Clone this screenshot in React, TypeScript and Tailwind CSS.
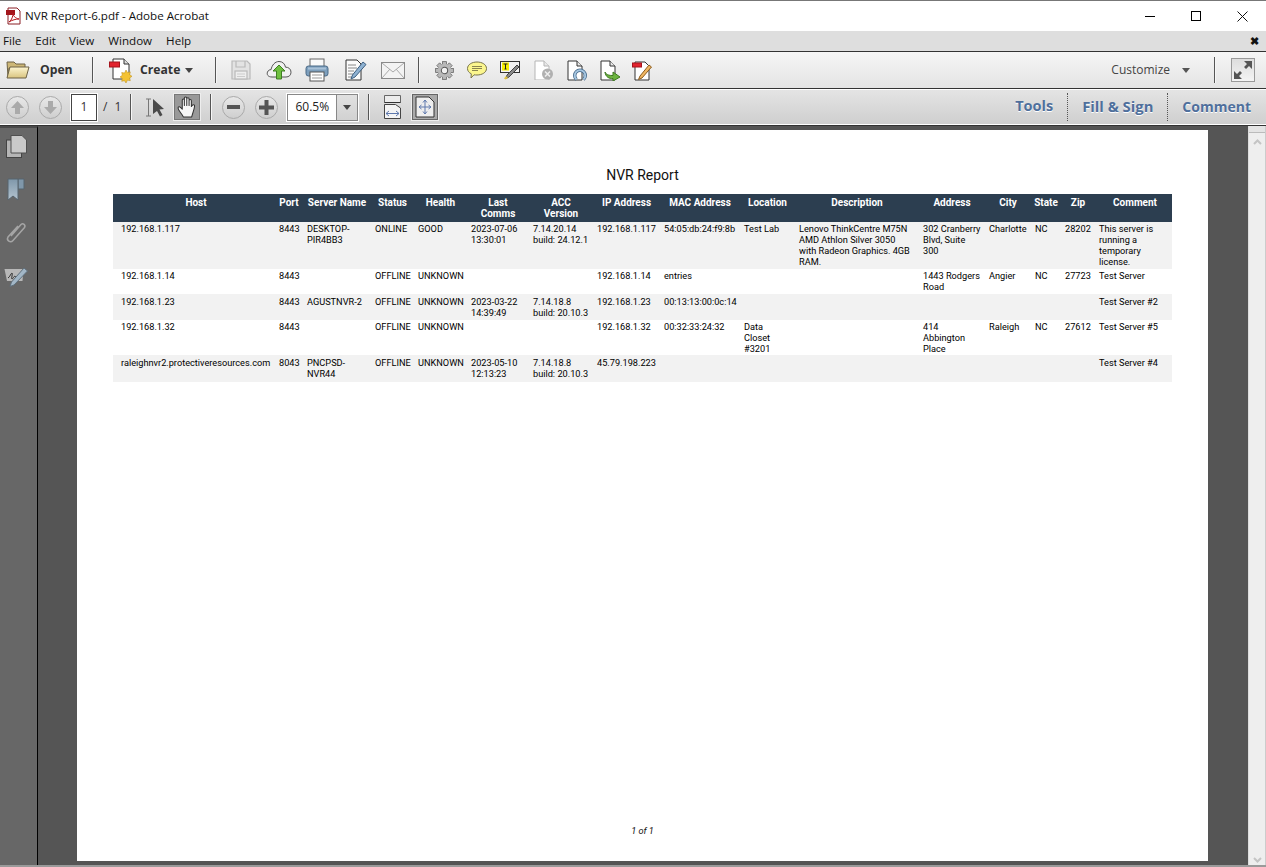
import { ReactNode } from 'react';

const uiFont = "font-['Open_Sans','Noto_Sans',sans-serif]";

// ---- window chrome icons ----
function PdfLogo() {
  return (
    <svg width="18" height="18" viewBox="0 0 18 18">
      <path d="M3 1h9l3 3v13H3z" fill="#fff" stroke="#8a1f24" />
      <rect x="1" y="3" width="9" height="5" fill="#a3161c" />
      <path d="M4 15c3-2 4-6 4-9 0 3 2 5 6 6-3 0-7 1-10 3z" fill="none" stroke="#b5161c" />
    </svg>
  );
}

function FolderIcon() {
  return (
    <svg width="24" height="22" viewBox="0 0 24 22">
      <defs>
        <linearGradient id="fold" x1="0" y1="0" x2="0" y2="1">
          <stop offset="0" stopColor="#fdf5d0" />
          <stop offset="1" stopColor="#d9c47f" />
        </linearGradient>
      </defs>
      <path d="M1 3h7l2 2h9v4H3L2 18z" fill="#cdb777" stroke="#6e6346" />
      <path d="M4 8h19l-3 11H1z" fill="url(#fold)" stroke="#6e6346" />
    </svg>
  );
}

function CreateIcon() {
  return (
    <svg width="24" height="26" viewBox="0 0 24 26">
      <path d="M4 2h11l5 5v15H4z" fill="#fff" stroke="#333" />
      <path d="M15 2v5h5" fill="#ddd" stroke="#333" />
      <rect x="0.5" y="5" width="10" height="5" fill="#e2232e" stroke="#a5141c" />
      <path d="M17 13l1.500 2.500 2.800-.6-.6 2.800 2.300 1.600-2.300 1.600.6 2.800-2.800-.6L17 26l-1.500-2.300-2.800.6.6-2.800-2.300-1.600 2.300-1.600-.6-2.800 2.800.6z" fill="#f4c233" stroke="#b98a18" strokeWidth="0.5" />
    </svg>
  );
}

function SaveIcon() {
  return (
    <svg width="20" height="20" viewBox="0 0 20 20" fill="none" stroke="#b9b9b9" strokeWidth="1.2">
      <path d="M1 1h15l3 3v15H1z" fill="#e3e3e3" />
      <path d="M5 1v6h9V1" />
      <rect x="4" y="11" width="12" height="8" fill="#eee" />
      <path d="M6 14h8M6 16.500h8" stroke="#ccc" />
    </svg>
  );
}

function UploadIcon() {
  return (
    <svg width="26" height="22" viewBox="0 0 26 22">
      <path d="M6 18C2 18 0.500 15.500 1.500 13c.7-1.600 2-2.400 3.500-2.300C6 6 9 2.500 13 2.500c3.600 0 6 2.500 6.500 5.700 3-.2 5.500 1.900 5.500 5 0 3-2 4.800-5 4.800z" fill="#f1f1f1" stroke="#555" />
      <path d="M13 6l6 6h-3.500v8h-5v-8H7z" fill="#6fc040" stroke="#3f7f22" />
    </svg>
  );
}

function PrintIcon() {
  return (
    <svg width="24" height="24" viewBox="0 0 24 24">
      <rect x="5" y="1" width="14" height="8" fill="#fafafa" stroke="#666" />
      <rect x="1" y="8" width="22" height="10" rx="2.500" fill="#7d9fbd" stroke="#4b6a87" />
      <rect x="3" y="9.500" width="18" height="2" fill="#a9c2d8" />
      <rect x="5" y="14" width="14" height="9" fill="#fff" stroke="#555" />
      <path d="M7 17h10M7 20h10" stroke="#999" />
    </svg>
  );
}

function EditDocIcon() {
  return (
    <svg width="22" height="22" viewBox="0 0 22 22">
      <path d="M1 1h11l4 4v16H1z" fill="#fbfbfb" stroke="#333" />
      <path d="M3 6h8M3 9h9M3 12h6M3 15h5M3 18h4" stroke="#888" />
      <path d="M18 3l3 2.500L10 18l-4 2 1.500-4z" fill="#8fb2d2" stroke="#3d5f80" />
    </svg>
  );
}

function MailIcon() {
  return (
    <svg width="24" height="17" viewBox="0 0 24 17" fill="#f3f3f3" stroke="#8a8a8a">
      <rect x="0.500" y="0.500" width="23" height="16" />
      <path d="M1 1l11 9 11-9M1 16l8-9M23 16l-8-9" fill="none" stroke="#aaa" />
    </svg>
  );
}

function GearIcon() {
  const teeth = [0, 45, 90, 135, 180, 225, 270, 315];
  return (
    <svg width="19" height="19" viewBox="0 0 24 24">
      {teeth.map((deg) => (
        <rect key={deg} x="9.500" y="0.800" width="5" height="5" fill="#b8b8b8" stroke="#666" transform={`rotate(${deg} 12 12)`} />
      ))}
      <circle cx="12" cy="12" r="8.500" fill="#b8b8b8" />
      <circle cx="12" cy="12" r="4" fill="#f2f2f2" stroke="#5a5a5a" strokeWidth="1.300" />
    </svg>
  );
}

function CommentIcon() {
  return (
    <svg width="20" height="18" viewBox="0 0 20 18">
      <path d="M10 1c5 0 9.500 2.500 9.500 6.500S15 14 10 14c-1 0-2 0-3-.2L4 17l.3-4.200C2 11.700.5 10 .5 7.500.5 3.500 5 1 10 1z" fill="#fbf68e" stroke="#77734a" />
      <path d="M5 5.500h10M5 7.500h10M5 9.500h6" stroke="#8a8550" />
    </svg>
  );
}

function TextEditIcon() {
  return (
    <svg width="20" height="20" viewBox="0 0 20 20">
      <rect x="0.500" y="1.500" width="19" height="11" fill="#f4f4f4" stroke="#333" />
      <rect x="2" y="2.500" width="7" height="8" fill="#f7f000" />
      <path d="M3.500 4h4M5.500 4v5M4.500 9h2" stroke="#222" fill="none" />
      <path d="M17 5l2 2L9 17l-3 1.500L7 15z" fill="#8a8a8a" stroke="#444" />
      <path d="M6 16l2 2-2.500 1.500-1.500-1z" fill="#e0c341" />
    </svg>
  );
}

function DocBase({ stroke = '#333' }: { stroke?: string }) {
  return (
    <>
      <path d="M1 1h9l5 5v14H1z" fill="#fff" stroke={stroke} />
      <path d="M10 1v5h5" fill="#e8e8e8" stroke={stroke} />
    </>
  );
}

function DocCancelIcon() {
  return (
    <svg width="20" height="20" viewBox="0 0 20 20">
      <DocBase stroke="#b5b5b5" />
      <circle cx="13.500" cy="14" r="5.500" fill="#b0b0b0" />
      <path d="M11 11.500l5 5M16 11.500l-5 5" stroke="#eee" strokeWidth="1.500" />
    </svg>
  );
}

function DocSearchIcon() {
  return (
    <svg width="20" height="21" viewBox="0 0 20 21">
      <DocBase />
      <path d="M9.500 19.500A5.300 5.300 0 1 1 16.500 19.500" fill="none" stroke="#3f6487" strokeWidth="3.400" />
      <path d="M9.500 19.500A5.300 5.300 0 1 1 16.500 19.500" fill="none" stroke="#a6c6e0" strokeWidth="2" />
    </svg>
  );
}

function DocSendIcon() {
  return (
    <svg width="21" height="21" viewBox="0 0 21 21">
      <DocBase />
      <path d="M5 12c1 3 4 3.500 8 3.500V12l7 5-7 4v-2.500c-4 .3-7.500-1.500-8-6.500z" fill="#6cb33f" stroke="#3d7a1f" />
    </svg>
  );
}

function DocPenIcon() {
  return (
    <svg width="20" height="21" viewBox="0 0 20 21">
      <path d="M3 2h10l4 4v14H3z" fill="#fff" stroke="#333" />
      <rect x="0.500" y="3" width="9" height="4" fill="#e2232e" stroke="#a5141c" />
      <path d="M17 5l2.500 2L10 18l-3.500 1.500L8 16z" fill="#f0b662" stroke="#8a5b1d" />
    </svg>
  );
}

function Caret({ fill = '#444' }: { fill?: string }) {
  return (
    <svg width="8" height="5" viewBox="0 0 8 5">
      <path d="M0 0h8L4 5z" fill={fill} />
    </svg>
  );
}

function Sep({ className = '' }: { className?: string }) {
  return <div className={`h-[26px] w-[2px] shrink-0 bg-[#555] border-r border-[#f6f6f6] ${className}`} />;
}

// ---- second toolbar icons ----
function RoundBtn({ className, children }: { className: string; children: ReactNode }) {
  return (
    <div className={`w-[23px] h-[23px] rounded-full border border-[#aaa] bg-gradient-to-b from-[#e8e8e8] to-[#cfcfcf] flex items-center justify-center shrink-0 ${className}`}>
      {children}
    </div>
  );
}

function ArrowUp({ flip = false }: { flip?: boolean }) {
  return (
    <svg width="13" height="13" viewBox="0 0 13 13" className={flip ? 'rotate-180' : ''}>
      <path d="M6.500 0l6.500 7H9v6H4V7H0z" fill="#aaa" />
    </svg>
  );
}

function SelectIcon() {
  return (
    <svg width="20" height="19" viewBox="0 0 20 19">
      <path d="M1 1h5M1 18h5M3.500 1v17" stroke="#777" fill="none" />
      <path d="M8 1l11 10-4.500.5 3 5.500-2.500 1.500-3-5.500L8 16z" fill="#4a4a4a" />
    </svg>
  );
}

function HandIcon() {
  return (
    <svg width="21" height="22" viewBox="0 0 20 21">
      <path d="M6 20c-1-3-5-6-5-8.500 0-1.500 1.500-1.500 2.500-.5L5 12.500V4c0-1.500 2-1.500 2 0v5-7c0-1.500 2.300-1.500 2.300 0v7V2.800c0-1.500 2.200-1.500 2.200 0V9 4.500c0-1.500 2.200-1.500 2.200 0V10c1-2 3.300-2.500 3 0-.3 3-1.700 6-2.700 10z" fill="#f6f6f6" stroke="#333" strokeLinejoin="round" />
    </svg>
  );
}

function FitWidthIcon() {
  return (
    <svg width="17" height="24" viewBox="0 0 17 24">
      <path d="M0.500 7.500v-7h16v7z" fill="#ececec" stroke="#666" />
      <path d="M0.500 7.500h16" stroke="#333" />
      <path d="M0.500 9.500h11l5 3.500v10.500h-16z" fill="#f4f4f4" stroke="#444" />
      <path d="M2 18.500h13M2 18.500l3-2.500M2 18.500l3 2.500M15 18.500l-3-2.500M15 18.500l-3 2.500" stroke="#5e78ad" fill="none" />
    </svg>
  );
}

function FitPageIcon() {
  return (
    <svg width="20" height="22" viewBox="0 0 20 22">
      <path d="M1 1h13l5 5v15H1z" fill="#eee" stroke="#333" />
      <path d="M10 4v14M4 11h12M10 4l-2 2.500M10 4l2 2.500M10 18l-2-2.500M10 18l2-2.500M4 11l2.500-2M4 11l2.500 2M16 11l-2.500-2M16 11l-2.500 2" stroke="#5e78ad" fill="none" />
    </svg>
  );
}

function ExpandIcon() {
  return (
    <svg width="18" height="18" viewBox="0 0 18 18" fill="#555">
      <path d="M10 0h8v8l-3-3-3 3-2-2 3-3z" />
      <path d="M0 10l3 3 3-3 2 2-3 3 3 3H0z" />
    </svg>
  );
}

// ---- left rail icons ----
function PagesIcon() {
  return (
    <svg width="21" height="23" viewBox="0 0 21 23">
      <rect x="0.500" y="5" width="15" height="17.500" fill="#b5b5b5" stroke="#444" />
      <path d="M5 0.500h11l4.500 4.500v13H5z" fill="#c9c9c9" stroke="#4f4f4f" />
    </svg>
  );
}

function BookmarkIcon() {
  return (
    <svg width="18" height="23" viewBox="0 0 18 23">
      <defs>
        <linearGradient id="mark" x1="0" y1="0" x2="0" y2="1">
          <stop offset="0" stopColor="#7f97aa" />
          <stop offset="1" stopColor="#b4c4d0" />
        </linearGradient>
      </defs>
      <path d="M11 1h6v10h-6z" fill="#7f97aa" stroke="#56646f" />
      <path d="M1 1h10v21l-5-4-5 4z" fill="url(#mark)" stroke="#56646f" />
    </svg>
  );
}

function ClipIcon() {
  return (
    <svg width="22" height="23" viewBox="0 0 22 23" fill="none" stroke="#a5a5a5" strokeWidth="1.500">
      <path d="M6 15L16 3.500c2-2 5 .5 3.500 3L8 19.500c-2.500 3-7 0-5-3.500L13 5" />
    </svg>
  );
}

function SignIcon() {
  return (
    <svg width="24" height="19" viewBox="0 0 24 19">
      <path d="M0.500 1h19l-1 12H3z" fill="#b8b8b8" />
      <path d="M4 10c2-1 3-5 4-5s-1 6 0 6 2-3 3-3 0 3 1 3" stroke="#333" fill="none" />
      <path d="M20 0l3.500 3L10 17l-4 1.500L7.500 14z" fill="#a2b6c6" stroke="#5f6f7c" />
    </svg>
  );
}

function ScrollChevron({ flip = false }: { flip?: boolean }) {
  return (
    <svg width="9" height="6" viewBox="0 0 9 6" className={flip ? 'rotate-180' : ''}>
      <path d="M1 5l3.500-3.500L8 5" stroke="#c4c4c4" strokeWidth="2" fill="none" />
    </svg>
  );
}

// ---- report data ----
const columns = [
  { title: 'Host', width: 'w-[162px]' },
  { title: 'Port', width: 'w-[28px]' },
  { title: 'Server Name', width: 'w-[68px]' },
  { title: 'Status', width: 'w-[43px]' },
  { title: 'Health', width: 'w-[53px]' },
  { title: 'Last\nComms', width: 'w-[62px]' },
  { title: 'ACC\nVersion', width: 'w-[64px]' },
  { title: 'IP Address', width: 'w-[67px]' },
  { title: 'MAC Address', width: 'w-[80px]' },
  { title: 'Location', width: 'w-[55px]' },
  { title: 'Description', width: 'w-[124px]' },
  { title: 'Address', width: 'w-[66px]' },
  { title: 'City', width: 'w-[46px]' },
  { title: 'State', width: 'w-[30px]' },
  { title: 'Zip', width: 'w-[34px]' },
  { title: 'Comment', width: 'w-[77px]' },
];

const rows = [
  {
    style: 'h-[47px] bg-[#f2f2f2]',
    cell: 'pt-[1px]',
    values: ['192.168.1.117', '8443', 'DESKTOP-\nPIR4BB3', 'ONLINE', 'GOOD', '2023-07-06\n13:30:01', '7.14.20.14\nbuild: 24.12.1', '192.168.1.117', '54:05:db:24:f9:8b', 'Test Lab', 'Lenovo ThinkCentre M75N\nAMD Athlon Silver 3050\nwith Radeon Graphics. 4GB\nRAM.', '302 Cranberry\nBlvd, Suite\n300', 'Charlotte', 'NC', '28202', 'This server is\nrunning a\ntemporary\nlicense.'],
  },
  {
    style: 'h-[25px] bg-white',
    cell: 'pt-[1px]',
    values: ['192.168.1.14', '8443', '', 'OFFLINE', 'UNKNOWN', '', '', '192.168.1.14', 'entries', '', '', '1443 Rodgers\nRoad', 'Angier', 'NC', '27723', 'Test Server'],
  },
  {
    style: 'h-[26px] bg-[#f2f2f2]',
    cell: 'pt-[2px]',
    values: ['192.168.1.23', '8443', 'AGUSTNVR-2', 'OFFLINE', 'UNKNOWN', '2023-03-22\n14:39:49', '7.14.18.8\nbuild: 20.10.3', '192.168.1.23', '00:13:13:00:0c:14', '', '', '', '', '', '', 'Test Server #2'],
  },
  {
    style: 'h-[35px] bg-white',
    cell: 'pt-[1px]',
    values: ['192.168.1.32', '8443', '', 'OFFLINE', 'UNKNOWN', '', '', '192.168.1.32', '00:32:33:24:32', 'Data\nCloset\n#3201', '', '414\nAbbington\nPlace', 'Raleigh', 'NC', '27612', 'Test Server #5'],
  },
  {
    style: 'h-[27px] bg-[#f2f2f2]',
    cell: 'pt-[2px]',
    values: ['raleighnvr2.protectiveresources.com', '8043', 'PNCPSD-\nNVR44', 'OFFLINE', 'UNKNOWN', '2023-05-10\n12:13:23', '7.14.18.8\nbuild: 20.10.3', '45.79.198.223', '', '', '', '', '', '', '', 'Test Server #4'],
  },
];

function ReportTable() {
  return (
    <table className="w-[1059px] table-fixed border-collapse text-[9.2px] leading-[11px] text-black">
      <colgroup>
        {columns.map((c) => (
          <col key={c.title} className={c.width} />
        ))}
      </colgroup>
      <thead>
        <tr className="h-[28px] bg-[#2c3e50]">
          {columns.map((c, i) => (
            <th key={c.title} className={`align-top pt-[3px] pr-0 text-center text-[10px] font-bold text-white whitespace-pre ${i === 0 ? 'pl-1' : i === 15 ? 'pl-[3px]' : 'pl-0'}`}>
              {c.title}
            </th>
          ))}
        </tr>
      </thead>
      <tbody>
        {rows.map((r) => (
          <tr key={r.values[0]} className={r.style}>
            {r.values.map((v, i) => (
              <td key={i} className={`align-top font-normal whitespace-pre p-0 ${r.cell} ${i === 0 ? 'pl-2' : 'pl-1'}`}>
                {v}
              </td>
            ))}
          </tr>
        ))}
      </tbody>
    </table>
  );
}

export default function App() {
  return (
    <div className={`w-[1266px] h-[867px] flex flex-col overflow-hidden bg-white ${uiFont}`}>
      {/* title bar */}
      <div className="h-[31px] shrink-0 flex items-center border-t border-[#777] bg-white text-[11.6px] text-[#111]">
        <div className="ml-[5px] mr-[2px] flex"><PdfLogo /></div>
        <span>NVR Report-6.pdf - Adobe Acrobat</span>
        <div className="ml-auto mr-[1px] flex items-center">
          <div className="w-[46px] flex justify-center"><div className="w-[10px] h-px bg-black" /></div>
          <div className="w-[46px] flex justify-center"><div className="w-[10px] h-[10px] border border-black" /></div>
          <div className="w-[46px] flex justify-center">
            <svg width="11" height="11" viewBox="0 0 11 11"><path d="M0.500 0.500l10 10M10.500 0.500l-10 10" stroke="#111" /></svg>
          </div>
        </div>
      </div>

      {/* menu bar */}
      <div className="h-[20px] shrink-0 flex items-center bg-[#dedede] text-[11.6px] text-[#111]">
        <span className="ml-[3px]">File</span>
        <span className="ml-[14px]">Edit</span>
        <span className="ml-[13px]">View</span>
        <span className="ml-[14px]">Window</span>
        <span className="ml-[14px]">Help</span>
        <span className="ml-auto mr-[7px] mb-[2px] text-[11px] font-bold leading-none">✖</span>
      </div>

      {/* main toolbar */}
      <div className="h-[38px] shrink-0 flex items-center border-y border-[#333] bg-gradient-to-b from-[#f6f6f6] to-[#e4e4e4] text-[#333]">
        <div className="ml-[6px] flex"><FolderIcon /></div>
        <span className="ml-[10px] w-[33px] text-[12.2px] font-bold">Open</span>
        <Sep className="ml-[19px]" />
        <div className="ml-[15px] flex"><CreateIcon /></div>
        <span className="ml-[7px] w-[39px] text-[12.2px] font-bold">Create</span>
        <div className="ml-[6px] flex"><Caret /></div>
        <Sep className="ml-[22px]" />
        <div className="ml-[14px] flex"><SaveIcon /></div>
        <div className="ml-[15px] flex"><UploadIcon /></div>
        <div className="ml-[13px] flex"><PrintIcon /></div>
        <div className="ml-[16px] flex"><EditDocIcon /></div>
        <div className="ml-[14px] flex"><MailIcon /></div>
        <Sep className="ml-[13px]" />
        <div className="ml-[15px] flex"><GearIcon /></div>
        <div className="ml-[13px] flex"><CommentIcon /></div>
        <div className="ml-[13px] flex"><TextEditIcon /></div>
        <div className="ml-[14px] flex"><DocCancelIcon /></div>
        <div className="ml-[13px] flex"><DocSearchIcon /></div>
        <div className="ml-[13px] flex"><DocSendIcon /></div>
        <div className="ml-[11px] flex"><DocPenIcon /></div>
        <span className="ml-auto text-[12px] text-[#444]">Customize</span>
        <div className="ml-[12px] flex"><Caret fill="#555" /></div>
        <Sep className="ml-[24px]" />
        <div className="ml-[15px] mr-[11px] w-[24px] h-[24px] border border-[#999] bg-gradient-to-b from-[#ddd] to-[#f4f4f4] flex items-center justify-center">
          <ExpandIcon />
        </div>
      </div>

      {/* navigation toolbar */}
      <div className="h-[36px] shrink-0 flex items-center border-t border-white border-b bg-gradient-to-b from-[#e4e4e4] to-[#cfcfcf] text-[#333]">
        <RoundBtn className="ml-[6px]"><ArrowUp /></RoundBtn>
        <RoundBtn className="ml-[10px]"><ArrowUp flip /></RoundBtn>
        <div className="ml-[9px] w-[26px] h-[27px] border border-[#444] bg-white outline outline-1 outline-white flex items-center justify-center text-[12px]">1</div>
        <span className="ml-[6px] text-[12px]">/</span>
        <span className="ml-[7px] text-[12px]">1</span>
        <Sep className="ml-[9px]" />
        <div className="ml-[13px] flex"><SelectIcon /></div>
        <div className="ml-[9px] w-[26px] h-[26px] bg-[#999] border border-[#777] outline outline-1 outline-[#eee] flex items-center justify-center"><HandIcon /></div>
        <Sep className="ml-[10px]" />
        <RoundBtn className="ml-[10px]"><div className="w-[13px] h-[4px] bg-[#555]" /></RoundBtn>
        <RoundBtn className="ml-[10px]">
          <svg width="15" height="15" viewBox="0 0 15 15"><path d="M5.500 0h4v5.500H15v4H9.500V15h-4V9.500H0v-4h5.500z" fill="#555" /></svg>
        </RoundBtn>
        <div className="ml-[9px] w-[71px] h-[27px] flex border border-[#888] outline outline-1 outline-white">
          <div className="w-[48px] bg-white flex items-center justify-center text-[12px] text-[#222]">60.5%</div>
          <div className="flex-1 border-l border-[#888] flex items-center justify-center"><Caret /></div>
        </div>
        <Sep className="ml-[10px]" />
        <div className="ml-[14px] flex"><FitWidthIcon /></div>
        <div className="ml-[11px] w-[26px] h-[26px] bg-[#aaa] border border-[#666] outline outline-1 outline-[#eee] flex items-center justify-center"><FitPageIcon /></div>
        <div className="ml-auto flex items-center font-bold text-[#4f6f9c] [text-shadow:0_1px_0_#fff]">
          <span className="mb-[2px] text-[14.5px]">Tools</span>
          <div className="ml-[14px] h-[28px] border-l border-dotted border-[#555]" />
          <span className="ml-[14px] mb-[2px] text-[14.8px]">Fill &amp; Sign</span>
          <div className="ml-[14px] h-[28px] border-l border-dotted border-[#555]" />
          <span className="ml-[14px] mr-[15px] mb-[2px] text-[14px]">Comment</span>
        </div>
      </div>

      {/* workspace */}
      <div className="flex-1 min-h-0 flex bg-[#555] border-t border-[#333]">
        <div className="w-[38px] shrink-0 border-r border-black border-t-2 border-t-[#4a4a4a] bg-[#676767] flex flex-col items-center pt-[7px]">
          <div className="flex -ml-[5px]"><PagesIcon /></div>
          <div className="flex mt-[20px] -ml-[6px]"><BookmarkIcon /></div>
          <div className="flex mt-[20px] -ml-[5px]"><ClipIcon /></div>
          <div className="flex mt-[24px] -ml-[5px]"><SignIcon /></div>
        </div>
        <div className="flex-1 min-w-0 pl-[39px] pr-[40px] pt-[4px] pb-[4px]">
          <div className="h-full bg-white flex flex-col font-['Roboto',sans-serif]">
            <div className="mt-[36px] text-center text-[14px] leading-[18px] text-[#111]">NVR Report</div>
            <div className="mt-[10px] ml-[36px]"><ReportTable /></div>
            <div className="mt-auto mb-[25px] text-center text-[9.2px] leading-[11px] italic text-[#111]">1 of 1</div>
          </div>
        </div>
        <div className="w-[18px] shrink-0 bg-[#eee] flex flex-col items-center border-l border-[#ddd] border-r border-r-[#ccc] pb-[2px]">
          <div className="w-full h-[7px] border-b border-[#bbb] bg-[#e4e4e4]" />
          <div className="flex mt-[6px]"><ScrollChevron /></div>
          <div className="flex mt-auto"><ScrollChevron flip /></div>
        </div>
      </div>
      <div className="h-[2px] shrink-0 bg-[#9a9a9a]" />
    </div>
  );
}
